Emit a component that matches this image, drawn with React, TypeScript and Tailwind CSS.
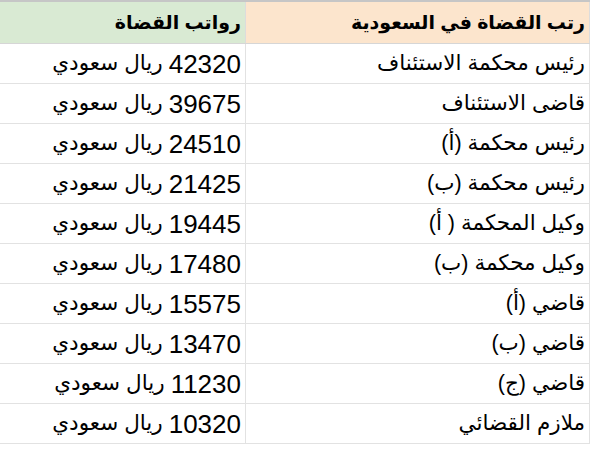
import React from "react";

type Rank = {
    title: string;
    salary: string;
};

const ranks: Rank[] = [
    { title: "رئيس محكمة الاستئناف", salary: "42320" },
    { title: "قاضى الاستئناف", salary: "39675" },
    { title: "رئيس محكمة (أ)", salary: "24510" },
    { title: "رئيس محكمة (ب)", salary: "21425" },
    { title: "وكيل المحكمة ( أ)", salary: "19445" },
    { title: "وكيل محكمة (ب)", salary: "17480" },
    { title: "قاضي (أ)", salary: "15575" },
    { title: "قاضي (ب)", salary: "13470" },
    { title: "قاضي (ج)", salary: "11230" },
    { title: "ملازم القضائي", salary: "10320" },
];

const font = { fontFamily: '"Liberation Sans", Arial, "DejaVu Sans", sans-serif' };

export default function App() {
    return (
        <div className="h-[450px] w-[593px] overflow-hidden bg-white" style={font}>
            <div dir="rtl" className="w-[590px] border-t-2 border-[#c6c6c6] text-black">
                <div className="grid h-[42px] grid-cols-[345px_245px] border-b border-[#d6d6d6] text-[19px] font-bold leading-none">
                    <div className="flex items-center border-l border-r border-[#dcdcdc] bg-[#fce5cd] px-1">
                        رتب القضاة في السعودية
                    </div>
                    <div className="flex items-center bg-[#d9ead3] px-1">رواتب القضاة</div>
                </div>

                {ranks.map(rank => {
                    return (
                        <div
                            className="grid h-[40px] grid-cols-[345px_245px] border-b border-[#e2e2e2] leading-none"
                            key={rank.salary}
                        >
                            <div className="flex items-center border-l border-r border-[#e2e2e2] px-1 text-[21.5px]">
                                {rank.title}
                            </div>
                            <div className="flex items-center gap-[6px] px-1">
                                <span className="text-[26px]">{rank.salary}</span>
                                <span className="text-[21.5px]">ريال سعودي</span>
                            </div>
                        </div>
                    );
                })}
            </div>
        </div>
    );
}
